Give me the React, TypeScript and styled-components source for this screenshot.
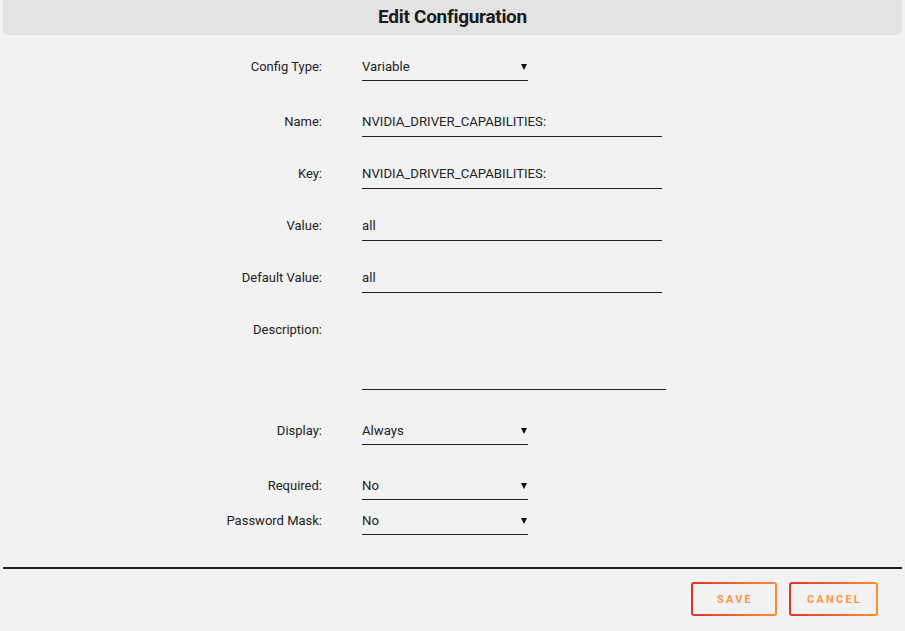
import React from "react";
import styled, { createGlobalStyle } from "styled-components";

const Global = createGlobalStyle`
  html, body { margin: 0; padding: 0; background: #f2f2f2; }
  body { font-family: Roboto, "Noto Sans", sans-serif; color: #222; }
`;

const Page = styled.div`
  width: 905px;
  height: 631px;
  padding: 0 3px;
  box-sizing: border-box;
  display: flex;
  flex-direction: column;
  background: #f2f2f2;
`;

const Header = styled.div`
  height: 35px;
  background: #e3e3e3;
  border-radius: 0 0 5px 5px;
  display: flex;
  align-items: center;
  justify-content: center;
`;

const Title = styled.h1`
  margin: 0;
  font-family: Roboto, sans-serif;
  font-weight: 700;
  font-size: 19px;
  letter-spacing: -0.3px;
  color: #1b1b1b;
  padding-bottom: 3px;
`;

const Form = styled.div`
  display: flex;
  flex-direction: column;
  padding-top: 18px;
`;

const Row = styled.div<{ $gap: number }>`
  display: flex;
  align-items: flex-start;
  margin-top: ${(p) => p.$gap}px;
`;

const Label = styled.div<{ $select?: boolean }>`
  width: 319px;
  text-align: right;
  font-size: 13px;
  line-height: 16px;
  padding-top: ${(p) => (p.$select ? 6 : 5)}px;
  color: #222;
  margin-right: 40px;
`;

const TextField = styled.div<{ $width: number; $height?: number }>`
  width: ${(p) => p.$width}px;
  height: ${(p) => p.$height ?? 28}px;
  box-sizing: border-box;
  padding-top: 5px;
  font-size: 13.2px;
  line-height: 16px;
  color: #222;
  border-bottom: 1px solid #222;
`;

const Select = styled(TextField)`
  display: flex;
  justify-content: space-between;
  padding-top: 6px;
`;

const Arrow = styled.span`
  width: 0;
  height: 0;
  margin: 5px 1px 0 0;
  border-left: 3px solid transparent;
  border-right: 3px solid transparent;
  border-top: 6px solid #111;
`;

const Divider = styled.div`
  height: 2px;
  background: #1e1e1e;
  margin-top: 32px;
`;

const Footer = styled.div`
  display: flex;
  justify-content: flex-end;
  gap: 12px;
  padding: 13px 24px 0 0;
`;

const Button = styled.button<{ $width: number }>`
  width: ${(p) => p.$width}px;
  height: 34px;
  border: 2px solid transparent;
  border-radius: 3px;
  background: linear-gradient(#f2f2f2, #f2f2f2) padding-box,
    linear-gradient(to right, #e0322f, #ff8f2e) border-box;
  font-family: Roboto, sans-serif;
  font-weight: 700;
  font-size: 11px;
  letter-spacing: 2.2px;
  color: #ff9547;
  cursor: pointer;
  padding: 0 0 0 2px;
`;

type F = { label: string; value: string; kind: "select" | "text" | "area"; gap: number };

const fields: F[] = [
  { label: "Config Type:", value: "Variable", kind: "select", gap: 0 },
  { label: "Name:", value: "NVIDIA_DRIVER_CAPABILITIES:", kind: "text", gap: 28 },
  { label: "Key:", value: "NVIDIA_DRIVER_CAPABILITIES:", kind: "text", gap: 24 },
  { label: "Value:", value: "all", kind: "text", gap: 24 },
  { label: "Default Value:", value: "all", kind: "text", gap: 24 },
  { label: "Description:", value: "", kind: "area", gap: 24 },
  { label: "Display:", value: "Always", kind: "select", gap: 27 },
  { label: "Required:", value: "No", kind: "select", gap: 27 },
  { label: "Password Mask:", value: "No", kind: "select", gap: 7 },
];

export default function App() {
  return (
    <>
      <Global />
      <Page>
        <Header>
          <Title>Edit Configuration</Title>
        </Header>
        <Form>
          {fields.map((f) => (
            <Row key={f.label} $gap={f.gap}>
              <Label $select={f.kind === "select"}>{f.label}</Label>
              {f.kind === "select" ? (
                <Select $width={166}>
                  <span>{f.value}</span>
                  <Arrow />
                </Select>
              ) : f.kind === "area" ? (
                <TextField $width={304} $height={73} />
              ) : (
                <TextField $width={300}>{f.value}</TextField>
              )}
            </Row>
          ))}
        </Form>
        <Divider />
        <Footer>
          <Button $width={86}>SAVE</Button>
          <Button $width={89}>CANCEL</Button>
        </Footer>
      </Page>
    </>
  );
}
